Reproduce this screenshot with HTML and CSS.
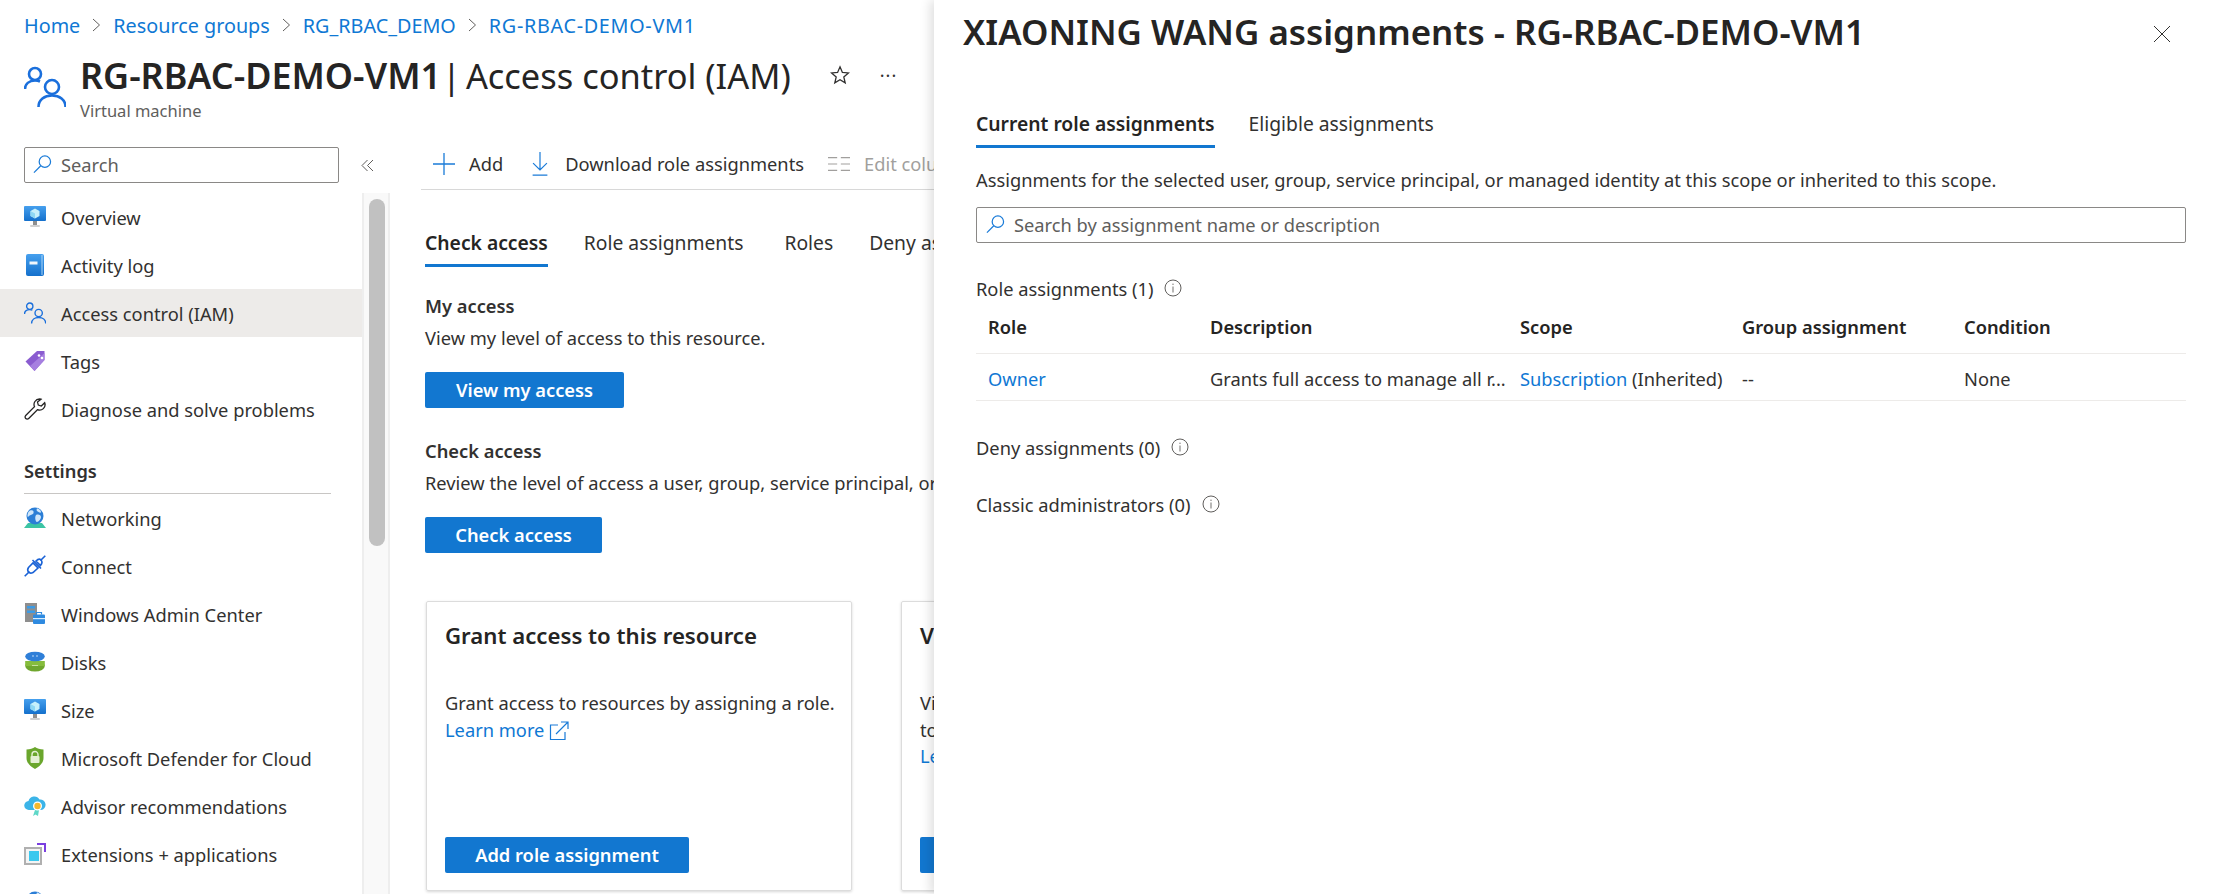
FILE: index.html

```html
<!DOCTYPE html>
<html lang="en">
<head>
  <meta charset="UTF-8">
  <title>RG-RBAC-DEMO-VM1 | Access control (IAM)</title>
  <meta name="viewport" content="width=device-width, initial-scale=1.0">
  <link rel="stylesheet" href="styles.css">
</head>
<body>
  <!-- shared icons -->
  <svg class="defs" aria-hidden="true">
    <defs>
      <linearGradient id="blue" x1="0" y1="0" x2="0" y2="1">
        <stop offset="0" stop-color="#46a0ee"/>
        <stop offset="1" stop-color="#1470cc"/>
      </linearGradient>
      <symbol id="i-people" viewBox="0 0 42 42">
        <g fill="none" stroke="#1a6fdc" stroke-width="2.6">
          <circle cx="11" cy="8" r="6"/>
          <path d="M1 23c0-5 4-8.500 10-8.500 2 0 3.500.3 5 1"/>
          <circle cx="28" cy="21" r="7"/>
          <path d="M14.500 41c0-7.500 6-11.500 13.500-11.500S41.500 33.500 41.500 41"/>
        </g>
      </symbol>
      <symbol id="i-search" viewBox="0 0 20 20">
        <g fill="none" stroke="#1a7bd8" stroke-width="1.300">
          <circle cx="12.500" cy="7" r="6"/>
          <path d="M8.200 11.300 1 18.500"/>
        </g>
      </symbol>
      <symbol id="i-vm" viewBox="0 0 22 22">
        <rect x="0" y="0" width="22" height="15" rx="1" fill="url(#blue)"/>
        <path d="M11 2.500 15.500 5v5L11 12.500 6.500 10V5z" fill="#c6f0fb"/>
        <path d="M11 7.500V12.500L6.500 10V5zM11 7.500 15.500 5" fill="#8ed8f4"/>
        <rect x="9" y="15" width="4" height="4" fill="#8f8f8f"/>
        <rect x="6" y="19" width="10" height="2" rx="1" fill="#d0d0d0"/>
      </symbol>
      <symbol id="i-book" viewBox="0 0 22 22">
        <rect x="2" y="0" width="18" height="22" rx="2" fill="url(#blue)"/>
        <rect x="17.500" y="1" width="1" height="20" fill="#a9d3f5"/>
        <rect x="5.500" y="7.500" width="8" height="3" fill="#f2f7fc"/>
      </symbol>
      <symbol id="i-tag" viewBox="0 0 22 22">
        <path d="M1.500 11.500 13 1h7.500v9L10.500 21z" fill="#8a5cd0"/>
        <path d="M6 16 20.500 3v7L10.500 21z" fill="#a67fe0"/>
        <circle cx="15" cy="5.500" r="1.300" fill="#fff"/>
        <circle cx="18" cy="8" r="1.300" fill="#fff"/>
      </symbol>
      <symbol id="i-wrench" viewBox="0 0 22 22">
        <path d="M15.500 1a5.500 5.500 0 0 0-5 7.700L1.700 17.500a2.100 2.100 0 0 0 3 3l8.700-8.800a5.500 5.500 0 0 0 7.300-7l-3.400 3.300-3-.9-.8-3L17 1.200A5.500 5.500 0 0 0 15.500 1z" fill="none" stroke="#252423" stroke-width="1.300"/>
      </symbol>
      <symbol id="i-globe" viewBox="0 0 22 22">
        <path d="M0 21 4 16h14l4 5z" fill="#3cc4a4"/>
        <circle cx="11" cy="9" r="8.500" fill="#2b7ed6"/>
        <path d="M6 3.500c3-1 4 .5 3.500 2.500S6 7.500 4.500 9.500 3 5 6 3.500zM12 8c2.500-1 5 0 5 2s-2.500 5-4 5-2.500-5-1-7zM13 1.500c2 0 4 2 4 3.500s-3 0-4-1 0-2.500 0-2.500z" fill="#cfe6fa"/>
      </symbol>
      <symbol id="i-plug" viewBox="0 0 22 22">
        <g fill="none" stroke="#1a62d6" stroke-width="1.600">
          <path d="M.7 21.300 5.500 16.500M16.500 5.500 21.300.7"/>
          <path d="M8.500 5 17 13.500M9 17.500c-2 1-3.500.7-4.500-.5s-1-3 0-4.500L9 8l5 5zM12 6c2-2 4-2 5-1s1.500 3-.5 5.500L12 6z"/>
        </g>
      </symbol>
      <symbol id="i-wac" viewBox="0 0 22 22">
        <rect x="1" y="0" width="12" height="19" fill="#8e8e8e"/>
        <rect x="3" y="3" width="8" height="2.500" fill="#3b9be6"/>
        <rect x="3" y="7.500" width="8" height="2.500" fill="#3b9be6"/>
        <rect x="9" y="11.500" width="12" height="9.500" rx="1" fill="#2e8ae0"/>
        <rect x="9" y="15" width="12" height="1.200" fill="#d6ecfc"/>
        <path d="M12.500 11.500V9.500h5v2" fill="none" stroke="#2e8ae0" stroke-width="1.200"/>
      </symbol>
      <symbol id="i-disks" viewBox="0 0 22 22">
        <ellipse cx="11" cy="15" rx="9.800" ry="5.500" fill="#6fa62e"/>
        <rect x="1.200" y="10" width="19.600" height="5" fill="#86bc3c"/>
        <ellipse cx="11" cy="5.500" rx="9.800" ry="4.800" fill="#2f7fd8"/>
        <rect x="8" y="4.500" width="2" height="1" fill="#bcd9f5"/>
        <rect x="12" y="4.500" width="2" height="1" fill="#bcd9f5"/>
        <rect x="8" y="14" width="6" height="1" fill="#c6e09c"/>
      </symbol>
      <symbol id="i-shield" viewBox="0 0 22 22">
        <path d="M11 0c2 1.500 5 2.500 8.500 2.500V11c0 5-4 8.500-8.500 11-4.500-2.500-8.500-6-8.500-11V2.500C6 2.500 9 1.500 11 0z" fill="#6aa62c"/>
        <rect x="6.500" y="9" width="9" height="7" rx="1" fill="#e4f0d4"/>
        <path d="M8 9V7.500a3 3 0 0 1 6 0V9" fill="none" stroke="#e4f0d4" stroke-width="1.400"/>
      </symbol>
      <symbol id="i-advisor" viewBox="0 0 22 22">
        <path d="M5 15a4.500 4.500 0 0 1-.5-9 6 6 0 0 1 11-1.500 5 5 0 0 1 1.500 10.500z" fill="#3bb4e8"/>
        <path d="M11 15l-2 6 2.500-1.500L14 21l1-6z" fill="#5fd8c8"/>
        <circle cx="13.500" cy="11" r="4.500" fill="#fff"/>
        <circle cx="13.500" cy="11" r="3.200" fill="#f4b82e"/>
      </symbol>
      <symbol id="i-ext" viewBox="0 0 22 22">
        <path d="M1 5h16v16H1z" fill="#f4f4f4" stroke="#b0b0b0" stroke-width="2"/>
        <rect x="5" y="8" width="10" height="10" fill="#3cc8ee"/>
        <path d="M13 1h8v8" fill="none" stroke="#7a3fe0" stroke-width="2"/>
      </symbol>
      <symbol id="i-info" viewBox="0 0 18 18">
        <circle cx="9" cy="9" r="8" fill="none" stroke="#605e5c" stroke-width="1"/>
        <rect x="8.400" y="7.500" width="1.200" height="6" fill="#8a8886"/>
        <rect x="8.400" y="4.600" width="1.200" height="1.400" fill="#8a8886"/>
      </symbol>
      <symbol id="i-open" viewBox="0 0 20 20">
        <g fill="none" stroke="#1a7bd8" stroke-width="1.200">
          <path d="M9 4H1.500v14.500H16V11"/>
          <path d="M7 13 18.500 1.500M12 1h7v7"/>
        </g>
      </symbol>
    </defs>
  </svg>

  <div class="portal">
    <nav class="crumbs">
      <a href="#">Home</a>
      <svg class="chev" viewBox="0 0 9 14"><path d="M1 1l6.500 6L1 13"/></svg>
      <a href="#">Resource groups</a>
      <svg class="chev" viewBox="0 0 9 14"><path d="M1 1l6.500 6L1 13"/></svg>
      <a href="#">RG_RBAC_DEMO</a>
      <svg class="chev" viewBox="0 0 9 14"><path d="M1 1l6.500 6L1 13"/></svg>
      <a class="crumb-last" href="#">RG-RBAC-DEMO-VM1</a>
    </nav>

    <header class="blade-head">
      <svg class="head-icon"><use href="#i-people"/></svg>
      <div>
        <div class="head-title">
          <h1><b>RG-RBAC-DEMO-VM1</b> <span class="pipe">|</span> Access control (IAM)</h1>
          <svg class="star" viewBox="0 0 20 20"><path d="M10 1.800l2.400 5.600 6 .5-4.600 4 1.400 5.900L10 14.700l-5.200 3.100 1.400-5.900-4.600-4 6-.5z"/></svg>
          <span class="more">···</span>
        </div>
        <p class="head-sub">Virtual machine</p>
      </div>
    </header>

    <div class="blade">
      <aside class="side">
        <div class="side-top">
          <div class="searchbox side-search">
            <svg class="search-icon"><use href="#i-search"/></svg>
            <span>Search</span>
          </div>
          <svg class="collapse" viewBox="0 0 13 13"><path d="M6.500 1 1 6.500 6.500 12M12 1 6.500 6.500 12 12"/></svg>
        </div>
        <div class="side-scroll">
          <ul class="menu">
            <li><svg class="mi"><use href="#i-vm"/></svg>Overview</li>
            <li><svg class="mi"><use href="#i-book"/></svg>Activity log</li>
            <li class="active"><svg class="mi"><use href="#i-people"/></svg>Access control (IAM)</li>
            <li><svg class="mi"><use href="#i-tag"/></svg>Tags</li>
            <li><svg class="mi"><use href="#i-wrench"/></svg>Diagnose and solve problems</li>
            <li class="menu-group">Settings</li>
            <li><svg class="mi"><use href="#i-globe"/></svg>Networking</li>
            <li><svg class="mi"><use href="#i-plug"/></svg>Connect</li>
            <li><svg class="mi"><use href="#i-wac"/></svg>Windows Admin Center</li>
            <li><svg class="mi"><use href="#i-disks"/></svg>Disks</li>
            <li><svg class="mi"><use href="#i-vm"/></svg>Size</li>
            <li><svg class="mi"><use href="#i-shield"/></svg>Microsoft Defender for Cloud</li>
            <li><svg class="mi"><use href="#i-advisor"/></svg>Advisor recommendations</li>
            <li><svg class="mi"><use href="#i-ext"/></svg>Extensions + applications</li>
            <li><svg class="mi"><use href="#i-globe"/></svg></li>
          </ul>
          <div class="scrollbar"><div class="thumb"></div></div>
        </div>
      </aside>

      <main class="main">
        <div class="toolbar">
          <span class="tool">
            <svg class="tool-icon" viewBox="0 0 22 22"><path d="M11 0v22M0 11h22"/></svg>
            Add
          </span>
          <span class="tool">
            <svg class="tool-icon" viewBox="0 0 20 26"><path d="M10 0v19M2.500 12l7.500 7.500 7.500-7.500M2 25h16"/></svg>
            Download role assignments
          </span>
          <span class="tool off">
            <svg class="tool-icon gray" viewBox="0 0 24 16"><path d="M0 1h10M0 8h10M0 15h10M14 1h10M14 8h10M14 15h10"/></svg>
            Edit columns
          </span>
        </div>

        <div class="tabs main-tabs">
          <span class="tab on">Check access</span>
          <span class="tab">Role assignments</span>
          <span class="tab tab-roles">Roles</span>
          <span class="tab">Deny assignments</span>
        </div>

        <section class="access">
          <h3>My access</h3>
          <p>View my level of access to this resource.</p>
          <button class="btn btn-my">View my access</button>
        </section>
        <section class="access">
          <h3>Check access</h3>
          <p>Review the level of access a user, group, service principal, or managed identity has to this resource.</p>
          <button class="btn btn-check">Check access</button>
        </section>

        <div class="cards">
          <div class="card">
            <h2>Grant access to this resource</h2>
            <p>Grant access to resources by assigning a role.<br>
              <a href="#">Learn more <svg class="open"><use href="#i-open"/></svg></a></p>
            <button class="btn btn-add">Add role assignment</button>
          </div>
          <div class="card">
            <h2>View access to this resource</h2>
            <p>View the role assignments that grant access<br>to this and other resources.<br>
              <a href="#">Learn more <svg class="open"><use href="#i-open"/></svg></a></p>
            <button class="btn btn-add">View</button>
          </div>
        </div>
      </main>
    </div>
  </div>

  <div class="panel">
    <div class="panel-head">
      <h2>XIAONING WANG assignments - RG-RBAC-DEMO-VM1</h2>
      <svg class="close" viewBox="0 0 18 18"><path d="M1 1l16 16M17 1 1 17"/></svg>
    </div>
    <div class="panel-body">
      <div class="tabs panel-tabs">
        <span class="tab on">Current role assignments</span>
        <span class="tab">Eligible assignments</span>
      </div>
      <p class="panel-note">Assignments for the selected user, group, service principal, or managed identity at this scope or inherited to this scope.</p>
      <div class="searchbox panel-search">
        <svg class="search-icon"><use href="#i-search"/></svg>
        <span>Search by assignment name or description</span>
      </div>

      <div class="sec sec-role">Role assignments (1) <svg class="info"><use href="#i-info"/></svg></div>
      <div class="grid grid-head">
        <span>Role</span><span>Description</span><span>Scope</span><span>Group assignment</span><span>Condition</span>
      </div>
      <div class="grid grid-row">
        <a href="#">Owner</a>
        <span>Grants full access to manage all r...</span>
        <span><a href="#">Subscription</a> (Inherited)</span>
        <span>--</span>
        <span>None</span>
      </div>

      <div class="sec sec-deny">Deny assignments (0) <svg class="info"><use href="#i-info"/></svg></div>
      <div class="sec sec-classic">Classic administrators (0) <svg class="info"><use href="#i-info"/></svg></div>
    </div>
  </div>
</body>
</html>
```

FILE: styles.css

```css
* {
  box-sizing: border-box;
}

html, body {
  margin: 0;
  padding: 0;
  height: 100%;
}

body {
  position: relative;
  width: 2214px;
  height: 894px;
  overflow: hidden;
  background: #fff;
  color: #323130;
  font-family: "Noto Sans", "Open Sans", sans-serif;
  font-size: 18.3px;
  white-space: nowrap;
}

a {
  color: #0f78d4;
  text-decoration: none;
}

h1, h2, h3, p, ul {
  margin: 0;
  padding: 0;
}

.defs {
  display: block;
  width: 0;
  height: 0;
}

.portal {
  width: 934px;
  height: 894px;
  overflow: hidden;
}

/* breadcrumb + title */
.crumbs {
  display: flex;
  align-items: center;
  gap: 12px;
  height: 50px;
  padding-left: 24px;
  font-size: 19.8px;
}

.crumb-last {
  letter-spacing: 0.7px;
}

.chev {
  width: 9px;
  height: 14px;
  fill: none;
  stroke: #605e5c;
  stroke-width: 1;
}

.blade-head {
  display: flex;
  height: 90px;
  padding: 2px 0 0 24px;
  gap: 14px;
}

.head-icon {
  flex: none;
  width: 42px;
  height: 42px;
  margin-top: 14px;
}

.head-title {
  display: flex;
  align-items: center;
  height: 46px;
}

.head-title h1 {
  font-size: 34.4px;
  font-weight: 400;
  color: #252423;
}

.head-title b {
  font-size: 35.9px;
  font-weight: 600;
}

.pipe {
  margin: 0 -4px 0 -8px;
}

.star {
  flex: none;
  width: 20px;
  height: 20px;
  margin-left: 39px;
  fill: none;
  stroke: #323130;
  stroke-width: 1.3;
}

.more {
  margin-left: 30px;
  font-size: 18px;
  letter-spacing: 1px;
}

.head-sub {
  margin-top: 1px;
  font-size: 16.5px;
  color: #605e5c;
}

/* layout */
.blade {
  display: flex;
  height: 754px;
}

.side {
  flex: none;
  width: 390px;
  padding-top: 2px;
}

.side-top {
  display: flex;
  align-items: center;
  height: 46px;
  padding-left: 24px;
}

.searchbox {
  display: flex;
  align-items: center;
  height: 36px;
  padding-bottom: 2px;
  border: 1px solid #8a8886;
  border-radius: 2px;
  color: #605e5c;
}

.side-search {
  width: 315px;
  padding-left: 8px;
}

.search-icon {
  width: 19px;
  height: 19px;
  margin-right: 9px;
}

.collapse {
  width: 13px;
  height: 13px;
  margin-left: 22px;
  fill: none;
  stroke: #605e5c;
  stroke-width: 1;
}

.side-scroll {
  display: flex;
  height: 701px;
  margin-top: 5px;
}

.menu {
  flex: none;
  width: 362px;
  list-style: none;
}

.menu li {
  display: flex;
  align-items: center;
  height: 48px;
  padding-left: 24px;
}

.menu li.active {
  background: #edebe9;
}

.menu li.menu-group {
  align-items: flex-start;
  height: 61px;
  margin: 0 31px 0 24px;
  padding: 25px 0 0;
  border-bottom: 1px solid #c8c6c4;
  font-weight: 600;
}

.mi {
  flex: none;
  width: 22px;
  height: 22px;
  margin-right: 15px;
}

.scrollbar {
  flex: none;
  width: 28px;
  padding: 6px 3px 0 5px;
  background: #f9f9f9;
  border-left: 2px solid #eeeeee;
  border-right: 2px solid #eeeeee;
}

.thumb {
  height: 347px;
  background: #c1c1c1;
  border-radius: 8px;
}

.main {
  flex: 1;
  min-width: 0;
  overflow: hidden;
  padding-left: 31px;
}

.toolbar {
  display: flex;
  align-items: center;
  gap: 26px;
  height: 50px;
  padding: 0 0 2px 12px;
  border-bottom: 1px solid #d8d8d8;
}

.tool {
  display: flex;
  align-items: center;
  gap: 14px;
}

.tool.off {
  margin-left: -2px;
  color: #a19f9d;
}

.tool-icon {
  flex: none;
  height: 24px;
  width: 22px;
  fill: none;
  stroke: #1a7bd8;
  stroke-width: 1.3;
}

.tool-icon.gray {
  stroke: #a19f9d;
}

/* tabs */
.tabs {
  display: flex;
  font-size: 19.3px;
}

.tab {
  display: flex;
  align-items: center;
  height: 50px;
  border-bottom: 3px solid transparent;
  padding-top: 3px;
}

.tab.on {
  font-weight: 600;
  color: #252423;
  border-bottom-color: #1277d0;
}

.main-tabs {
  margin: 27px 0 0 4px;
  gap: 36px;
}

.tab-roles {
  margin-left: 5px;
}

.access {
  margin-left: 4px;
  padding-top: 23px;
}

.access + .access {
  padding-top: 27px;
}

.access h3 {
  font-size: 18.3px;
  font-weight: 600;
  line-height: 32px;
}

.access p {
  line-height: 32px;
}

.btn {
  display: block;
  height: 36px;
  padding-bottom: 3px;
  border: none;
  border-radius: 2px;
  background: #1277d0;
  color: #fff;
  font-family: inherit;
  font-size: 18.3px;
  font-weight: 600;
}

.btn-my {
  width: 199px;
  margin-top: 18px;
}

.btn-check {
  width: 177px;
  margin-top: 18px;
}

.cards {
  display: flex;
  gap: 49px;
  margin: 48px 0 0 5px;
}

.card {
  display: flex;
  flex-direction: column;
  flex: none;
  width: 426px;
  height: 290px;
  padding: 18px 18px 17px;
  border: 1px solid #dcdcdc;
  border-radius: 2px;
  box-shadow: 0 1px 3px rgba(0, 0, 0, 0.16);
}

.card h2 {
  font-size: 22.2px;
  font-weight: 600;
  line-height: 32px;
  color: #252423;
}

.card p {
  margin-top: 38px;
  line-height: 26.5px;
}

.open {
  width: 20px;
  height: 20px;
  vertical-align: -4px;
}

.btn-add {
  width: 244px;
  margin-top: auto;
}

/* side panel */
.panel {
  position: absolute;
  top: 0;
  right: 0;
  width: 1280px;
  height: 894px;
  background: #fff;
  box-shadow: -4px 0 10px rgba(0, 0, 0, 0.12);
}

.panel-head {
  display: flex;
  align-items: center;
  justify-content: space-between;
  height: 68px;
  padding: 0 43px 0 29px;
}

.panel-head h2 {
  margin-bottom: 6px;
  font-size: 34.9px;
  font-weight: 600;
  color: #252423;
}

.close {
  flex: none;
  width: 18px;
  height: 18px;
  fill: none;
  stroke: #323130;
  stroke-width: 1;
}

.panel-body {
  width: 1252px;
  padding-left: 42px;
}

.panel-tabs {
  margin-top: 30px;
  gap: 34px;
}

.panel-note {
  margin-top: 19px;
  line-height: 26px;
}

.panel-search {
  margin-top: 14px;
  padding-left: 9px;
}

.sec {
  display: flex;
  align-items: center;
  height: 26px;
}

.info {
  flex: none;
  width: 18px;
  height: 18px;
  margin-left: 11px;
}

.sec-role {
  margin-top: 32px;
}

.sec-deny {
  margin-top: 33px;
}

.sec-classic {
  margin-top: 31px;
}

.grid {
  display: grid;
  grid-template-columns: 222px 310px 222px 222px 1fr;
  align-items: center;
  padding-left: 12px;
}

.grid-head {
  height: 53px;
  padding-bottom: 2px;
  font-weight: 600;
  color: #252423;
  border-bottom: 1px solid #edebe9;
}

.grid-row {
  height: 47px;
  padding-top: 3px;
  border-bottom: 1px solid #edebe9;
}
```
